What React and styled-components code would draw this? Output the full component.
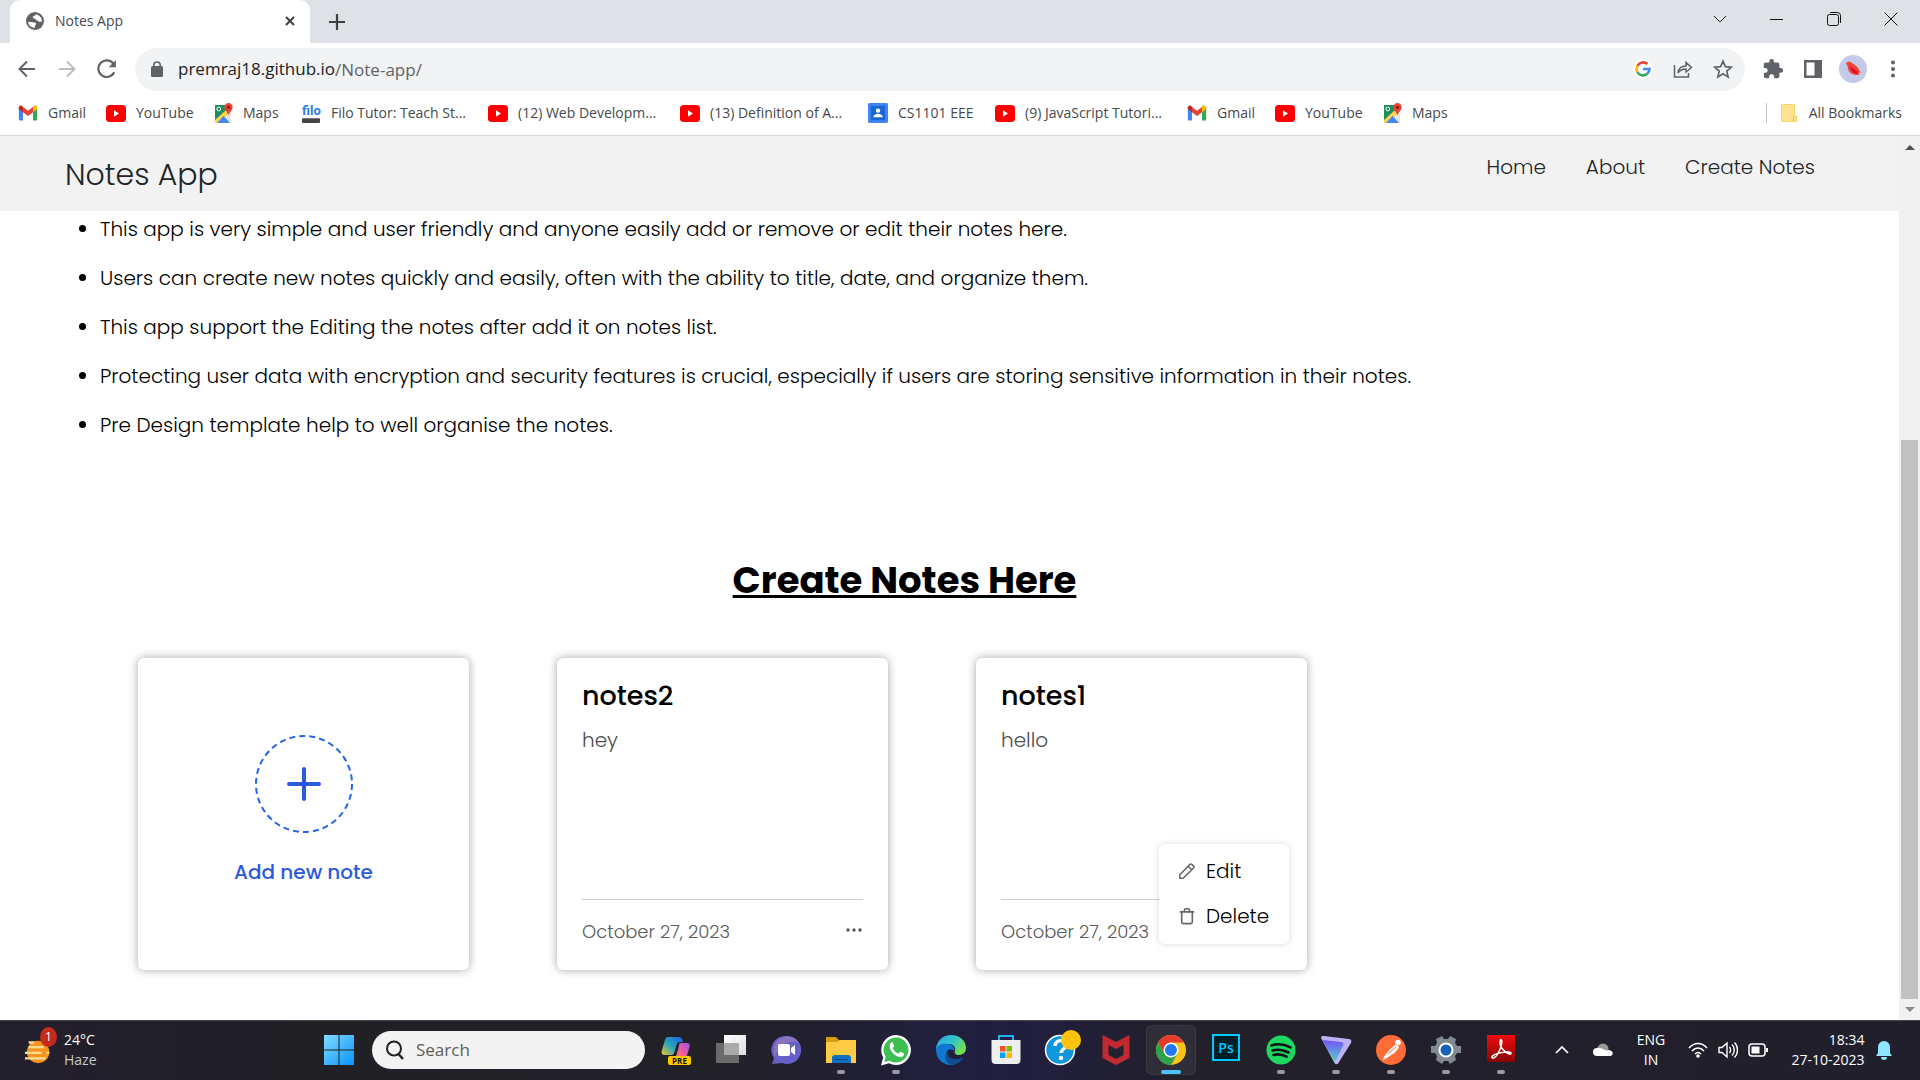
import React from "react";
import styled, { createGlobalStyle } from "styled-components";

const Global = createGlobalStyle`
  *{box-sizing:border-box}
  body{margin:0;background:#fff}
  h1,h2,h3,p,ul{margin:0;padding:0}
  button{font:inherit;color:inherit;background:none;border:0;padding:0;cursor:pointer;display:flex;align-items:center;justify-content:center}
  a{color:inherit;text-decoration:none}
  svg{display:block;flex:none}
`;
const ui = `"Segoe UI","Open Sans","Noto Sans",sans-serif`;
const web = `Poppins,Inter,sans-serif`;

const Screen = styled.div`min-height:100vh;display:flex;flex-direction:column;font-family:${ui};`;
const TabStrip = styled.header`height:43px;background:#dee1e6;display:flex;align-items:stretch;padding:0 1px 0 10px;`;
const Tab = styled.div`
  width:300px;background:#fff;border-radius:10px 10px 0 0;display:flex;align-items:center;gap:11px;padding:0 13px 2px 16px;
  font-size:14px;color:#45494d;span{flex:1}
`;
const NewTab = styled.button`width:54px;`;
const WindowButtons = styled.div`margin-left:auto;display:flex;`;
const WinBtn = styled.button`width:57px;height:37px;`;
const Toolbar = styled.div`display:flex;align-items:center;height:52px;padding:0 7px 0 7px;`;
const ToolBtn = styled.button`width:40px;height:40px;flex:none;`;
const Address = styled.div`
  flex:1;height:43px;margin:0 8px;border-radius:22px;background:#f1f3f4;display:flex;align-items:center;padding:0 2px 0 15px;gap:14px;
`;
const Cluster = styled.div`display:flex;margin-left:-14px;`;
const Url = styled.input`flex:1;min-width:0;border:0;outline:0;background:none;font:17px ${ui};color:#5f6368;padding:0;`;
const UrlBox = styled.label`flex:1;display:flex;font-size:17px;line-height:24px;color:#202124;`;
const Bookmarks = styled.nav`
  height:41px;border-bottom:1px solid #d5d6d8;display:flex;align-items:center;padding:0 18px 4px;gap:22px;font-size:14px;line-height:20px;color:#45494d;
`;
const Mark = styled.a`display:flex;align-items:center;gap:10px;white-space:nowrap;width:${p => p.$w}px;`;
const AllMarks = styled.a`margin-left:auto;height:20px;border-left:1px solid #c4c7cb;display:flex;align-items:center;gap:12px;padding-left:14px;`;

const Viewport = styled.div`flex:1;display:flex;background:#fff;`;
const Page = styled.main`flex:1;font-family:${web};`;
const Navbar = styled.header`
  height:75px;background:#f2f2f2;display:flex;align-items:center;padding:0 84px 0 65px;color:#212529;
`;
const Brand = styled.h1`font-weight:300;font-size:30px;line-height:44px;padding-top:3px;`;
const NavLinks = styled.nav`margin:0 0 14px auto;display:flex;gap:40px;font-size:20px;line-height:28px;font-weight:300;`;
const Features = styled.ul`padding:4px 40px 0 100px;font-size:20px;line-height:29px;font-weight:300;color:#000;li{margin-bottom:20px}`;
const Heading = styled.h2`font-size:37px;line-height:54px;font-weight:700;text-align:center;text-decoration:underline;text-decoration-thickness:3px;margin-top:113px;padding-right:90px;`;
const Grid = styled.section`display:flex;flex-wrap:wrap;gap:88px;padding:51px 40px 48px 138px;`;
const Card = styled.article`
  position:relative;width:331px;height:312px;border-radius:6px;background:#fff;box-shadow:0 0 10px rgba(0,0,0,.35);
  display:flex;flex-direction:column;padding:18px 25px 23px;
`;
const AddButton = styled.button`&&{flex:1;flex-direction:column;gap:22px;color:#2b5bdc;font-size:20px;line-height:34px;font-weight:500}`;
const Title = styled.h3`font-size:27px;line-height:40px;font-weight:500;`;
const Body = styled.p`font-size:20px;line-height:30px;font-weight:300;color:#4d4d4d;margin-top:9px;`;
const CardFoot = styled.footer`
  margin-top:auto;border-top:1px solid #ccc;padding-top:17px;display:flex;justify-content:space-between;align-items:center;font-size:18px;line-height:30px;font-weight:300;color:#5a5a5a;
`;
const Menu = styled.div`
  position:absolute;right:18px;bottom:26px;width:130px;height:100px;border-radius:5px;background:#fff;box-shadow:0 0 6px rgba(0,0,0,.15);
  display:flex;flex-direction:column;padding:4px 0;
`;
const MenuItem = styled.button`&&{justify-content:flex-start;height:45px;padding-left:19px;gap:10px;font-size:20px;font-weight:300;color:#000}`;
const Scrollbar = styled.div`width:21px;background:#f1f1f1;display:flex;flex-direction:column;align-items:center;justify-content:space-between;padding:7px 0 6px;`;
const Thumb = styled.div`width:17px;flex:1;margin:287px 0 5px;background:#c1c1c1;`;

const Taskbar = styled.footer`
  height:60px;border-top:1px solid #47474b;background:linear-gradient(90deg,#231f2d,#202025 16%,#222128 38%,#211f42 52%,#222029 62%,#221f2d);
  display:flex;align-items:center;color:#fff;padding:0 18px 2px 24px;
`;
const Weather = styled.button`&&{gap:8px;width:290px;justify-content:flex-start;text-align:left;font-size:14px;line-height:20px}`;
const Two = styled.span`display:flex;flex-direction:column;text-align:${p => p.$a || "left"};font-size:14px;line-height:20px;white-space:nowrap;`;
const Dim = styled.span`color:#c8c7cc;`;
const Start = styled.button`width:50px;height:48px;`;
const Search = styled.label`width:273px;height:38px;margin:0 6px 0 8px;border-radius:19px;background:#f3f3f3;display:flex;align-items:center;gap:11px;padding:0 13px;`;
const SearchInput = styled.input`border:0;outline:0;background:none;min-width:0;flex:1;padding:0;font:17px ${ui};color:#5d5d5d;&::placeholder{color:#5d5d5d;opacity:1}`;
const Apps = styled.div`display:flex;gap:5px;`;
const AppButton = styled.button`
  position:relative;width:50px;height:50px;border-radius:6px;${p => p.$active && "&&{background:#2f2d38;box-shadow:inset 0 0 0 1px #3a3843}"}
  &::after{content:"";position:absolute;bottom:1px;left:50%;transform:translateX(-50%);height:4px;border-radius:2px;width:${p => (p.$active ? 20 : p.$open ? 8 : 0)}px;background:${p => (p.$active ? "#4cc2ff" : "#9b9aa1")};}
`;
const Tray = styled.div`margin-left:auto;display:flex;align-items:center;`;
const TrayBtn = styled.button`&&{width:${p => p.$w}px;height:40px;gap:${p => p.$g || 0}px}`;

const S = ({ s = 20, v = 24, children, ...r }) => (
  <svg width={s} height={s} viewBox={`0 0 ${v} ${v}`} fill="none" aria-hidden="true" {...r}>{children}</svg>
);
const line = { stroke: "#5f6368", strokeWidth: 2 };

const PenIcon = () => (
  <S s={18} v={18}><path d="M1.800 16.200v-3.400L12 2.400a1.300 1.300 0 0 1 1.900 0l1.700 1.700a1.300 1.300 0 0 1 0 1.900L5.200 16.200zM10.200 4.300l3.500 3.500" stroke="#666" strokeWidth="1.500" strokeLinejoin="round" /></S>
);
const TrashIcon = () => (
  <S s={18} v={18}><path d="M1.800 4.900h14.400M3.700 4.900v10.200c0 .9.600 1.500 1.500 1.500h7.600c.9 0 1.500-.6 1.500-1.500V4.900M6.400 4.700V3.200c0-.9.600-1.500 1.500-1.500h2.200c.9 0 1.500.6 1.500 1.500v1.500" stroke="#666" strokeWidth="1.600" /></S>
);
const Gmail = () => (
  <S s={20}><path d="M1 6v13.500C1 20.300 1.700 21 2.500 21H6V10z" fill="#4285f4" /><path d="M18 10v11h3.500c.8 0 1.500-.7 1.500-1.500V6z" fill="#34a853" /><path d="M18 5v6l5-3.800V5.500C23 3 20 2 18 3.600z" fill="#fbbc04" /><path d="M6 11V4.700l6 4.600 6-4.600V11l-6 4.600z" fill="#ea4335" /><path d="M1 5.500v1.700L6 11V4.700L4.800 3.600C3.200 2.400 1 3.600 1 5.500z" fill="#c5221f" /></S>
);
const YouTube = () => (
  <svg width="20" height="17" viewBox="0 0 20 17" aria-hidden="true"><rect width="20" height="17" rx="3.500" fill="#f00" /><path d="M8 5.300v6.400l5-3.200z" fill="#fff" /></svg>
);
const Maps = () => (
  <svg width="18" height="22" viewBox="2 0 18 22" fill="none" aria-hidden="true"><path d="M2 3h16v18H2z" fill="#e4e4e4" /><path d="M2 3h11v8l-11 9z" fill="#1e8e5a" /><path d="M2 18L13 8l3 3L6 21H2z" fill="#fcd34b" /><path d="M4 21l6.500-7 6.500 7z" fill="#4285f4" /><circle cx="5.800" cy="7" r="1.900" stroke="#fff" /><path d="M15.500 1a4.200 4.200 0 0 1 4.200 4.200c0 3-3.200 4.500-4.200 8.300-1-3.800-4.200-5.300-4.200-8.300A4.200 4.200 0 0 1 15.500 1z" fill="#ea4335" /><circle cx="15.500" cy="5.300" r="1.600" fill="#811d16" /></svg>
);
const FiloBox = styled.span`display:flex;flex-direction:column;align-items:center;width:19px;font:700 13px/15px Roboto,sans-serif;color:#287de8;`;
const FiloTag = styled.span`width:18px;height:5px;border-radius:1px;background:#444;border-top:1px solid #777;`;
const Filo = () => <FiloBox>filo<FiloTag /></FiloBox>;
const Contact = () => (
  <S s={20} v={21}><rect width="21" height="21" rx="1.500" fill="#4285f4" /><rect x="3" y="3" width="15" height="15" fill="#1967d2" /><circle cx="10.500" cy="8" r="2.300" fill="#fff" /><path d="M5.500 15c0-5 10-5 10 0z" fill="#fff" /></S>
);
const marks = [
  ["Gmail", Gmail, 66], ["YouTube", YouTube, 87], ["Maps", Maps, 65], ["Filo Tutor: Teach St...", Filo, 164],
  ["(12) Web Developm...", YouTube, 170], ["(13) Definition of A...", YouTube, 166], ["CS1101 EEE", Contact, 105],
  ["(9) JavaScript Tutori...", YouTube, 170], ["Gmail", Gmail, 66], ["YouTube", YouTube, 87], ["Maps", Maps, 65],
];

const PreTag = styled.span`position:absolute;left:17px;bottom:10px;width:23px;background:#ffc800;color:#111;border-radius:2px;font-size:8px;line-height:9px;font-weight:700;text-align:center;`;
const PsTag = styled.span`width:28px;height:27px;border:2px solid #00c8ff;background:#001e26;color:#00c8ff;font-size:14px;line-height:23px;font-weight:600;text-align:center;margin-bottom:4px;`;
const CountTag = styled.span`position:absolute;left:16px;top:-8px;width:17px;height:20px;border-radius:50%;background:#c42b1c;color:#fff;font-size:12px;line-height:20px;text-align:center;`;
const WeatherIcon = styled.span`position:relative;width:32px;`;

const apps = [
  ["Copilot", <><S s={32} v={32}><defs><linearGradient id="c1" x1="0" y1="1" x2="1" y2="0"><stop stopColor="#f5c52c" /><stop offset=".45" stopColor="#2aa7b8" /><stop offset="1" stopColor="#1c5ee8" /></linearGradient><linearGradient id="c2" x1="1" y1="0" x2="0" y2="1"><stop stopColor="#a74df1" /><stop offset=".6" stopColor="#f0609b" /><stop offset="1" stopColor="#ff8b4a" /></linearGradient></defs><path d="M8 3h11c2 0 3 1 3.500 3L23 8h-3c-2 0-3 1-3.500 3l-2 7c-.5 2-1.500 3-3.500 3H5c-3 0-4-2-3-5l3-10c.6-2 1.500-3 3-3z" fill="url(#c1)" /><path d="M20 9h7c2.500 0 3 2 2.500 4l-3 10H14c2 0 2.500-2 3-4l2-7c.3-1.500 0-3 1-3z" fill="url(#c2)" /></S><PreTag>PRE</PreTag></>],
  ["Task View", <S s={32} v={32}><defs><linearGradient id="tv" x2="1" y2="1"><stop stopColor="#fff" /><stop offset="1" stopColor="#ddd" /></linearGradient></defs><rect x="1" y="9" width="23" height="20" fill="#6b6b6b" /><rect x="9" y="1" width="22" height="20" fill="url(#tv)" /><path d="M9 9h15v12H9z" fill="#aaa" /></S>],
  ["Chat", <S s={32} v={32}><path d="M17 2a14 14 0 1 1-5 27l-10 1 2-6A14 14 0 0 1 17 2z" fill="#6860c9" /><path d="M4 12A14 14 0 0 1 29 9C20 5 10 9 4 24z" fill="#8a73bd" /><rect x="8" y="10" width="12" height="12" rx="2" fill="#fff" /><path d="M21 14l4-3v10l-4-3z" fill="#fff" /></S>],
  ["File Explorer", <S s={32} v={32}><path d="M1 3h10l3 3h17v6H1z" fill="#d99a0b" /><path d="M1 8h11l3-2h16v23H1z" fill="#ffcb45" /><path d="M7 29v-5a3 3 0 0 1 3-3h13a3 3 0 0 1 3 3v5z" fill="#0f6fc0" /><path d="M10 25.500h13" stroke="#084c88" /></S>, 1],
  ["WhatsApp", <S s={32} v={32}><path d="M16 1a15 15 0 1 1-7 28.300L1 31.500l2.200-8A15 15 0 0 1 16 1z" fill="#fff" /><path d="M16 3.500a12.500 12.500 0 1 1-6.500 23.200L4.300 28l1.400-5A12.500 12.500 0 0 1 16 3.500z" fill="#3dbf52" /><path d="M10.500 9c1.500-1.400 2.200-.6 2.700.6l.9 2.200c.3 1-1.600 2-1.300 2.600 1.400 2.700 3.300 4.200 5.600 5 .8.200 1.400-2 2.300-1.700l3 1.500c.9.500.2 2.600-1 3.400-5 3-16-7-12.200-13.600z" fill="#fff" /></S>, 1],
  ["Edge", <S s={32} v={32}><defs><linearGradient id="e1" x2="1" y2=".5"><stop stopColor="#28a4e8" /><stop offset=".6" stopColor="#33c6c4" /><stop offset="1" stopColor="#70e24b" /></linearGradient></defs><path d="M1 16C1 7 8 1 16 1c9 0 15 6 15 13 0 5-4 7-7 7-4 0-5-2-4-4 1-4-2-7-6-7C7 10 2 14 1 16z" fill="url(#e1)" /><path d="M1 16c1-5 6-7 12-6 5 1 7 4 6 7-4-4-8 0-8 4 0 5 4 9 9 9.500C10 33 1 26 1 16z" fill="#0c78d4" /><path d="M13 16c-3 7 4 12 16 7-3 5-8 8-13 8-6-3-8-10-3-15z" fill="#104e91" /></S>],
  ["Store", <S s={32} v={32}><path d="M9 8V2h14v6" stroke="#21b2ee" strokeWidth="2" /><path d="M1.500 6h29v20c0 3-2 4-4 4h-21c-2 0-4-1-4-4z" fill="#eee" /><path d="M10 12h5.500v5.500H10z" fill="#f25022" /><path d="M16.500 12H22v5.500h-5.500z" fill="#7fba00" /><path d="M10 18.500h5.500V24H10z" fill="#00a4ef" /><path d="M16.500 18.500H22V24h-5.500z" fill="#ffb900" /></S>],
  ["Get Help", <svg width="40" height="40" viewBox="0 0 40 40"><circle cx="19" cy="20" r="14.500" fill="#1096dc" stroke="#fff" strokeWidth="1.500" /><path d="M14 16c0-7 11-7 11-1 0 4-5 4-5 8" stroke="#fff" strokeWidth="3.500" fill="none" /><circle cx="20" cy="28" r="2.200" fill="#fff" /><circle cx="30" cy="10" r="10" fill="#ffc20e" /></svg>],
  ["McAfee", <S s={32} v={32}><path d="M2.500 1l13.500 7 13.500-7v23L16 31 2.500 24zm6 10v10l7.500 4 7.500-4V11L16 15z" fill="#c12b2f" fillRule="evenodd" /></S>],
  ["Chrome", <S s={32} v={32}><circle cx="16" cy="16" r="15" fill="#fbc116" /><path d="M3 8.500A15 15 0 0 1 29 8.500H16L9.500 19.750z" fill="#e33b2e" /><path d="M3 8.500A15 15 0 0 0 16 31l6.500-11.250H9.500z" fill="#2da14c" /><circle cx="16" cy="16" r="7.500" fill="#fff" /><circle cx="16" cy="16" r="6" fill="#2478ef" /></S>, 0, 1],
  ["Photoshop", <PsTag>Ps</PsTag>],
  ["Spotify", <S s={32} v={32}><circle cx="16" cy="16" r="14.500" fill="#1ed760" /><path d="M6.500 11.500c6-2 13-1.200 19 1.800M7.500 16.500c5.500-1.500 11-.8 16 2M8.500 21c4.500-1.200 9-.6 13 1.700" stroke="#111" strokeWidth="2.600" strokeLinecap="round" /></S>, 1],
  ["Proton VPN", <S s={32} v={32}><defs><linearGradient id="pv" x2="0" y2="1"><stop stopColor="#7750f6" /><stop offset="1" stopColor="#50d6ca" /></linearGradient></defs><path d="M1 4c0-2 1-2 3-2l25 3c2 0 3 2 2 4L19 28c-1 3-4 3-5 0z" fill="#b9b3f5" /><path d="M2 6l19 2c2 0 3 2 2 4l-8 16z" fill="url(#pv)" /></S>, 1],
  ["Postman", <S s={32} v={32}><circle cx="16" cy="16" r="15" fill="#ff6c37" /><circle cx="23" cy="8.500" r="2.800" fill="#fff" /><path d="M20 11c2 0 4 1 4 2.500l-4 5-12 8 1-4 6-7z" fill="#fff" /><path d="M13 20l8-7" stroke="#ff6c37" /></S>, 1],
  ["Settings", <S s={32} v={32}><path d="M12 2l2 3h4l2-3 6 3-1 4 2 3h4v7h-4l-2 3 1 4-6 4-2-3h-4l-2 3-6-4 1-4-2-3H1v-7h4l2-3-1-4z" fill="#818991" /><circle cx="16" cy="16" r="6.500" fill="#1164b4" stroke="#fff" strokeWidth="2" /></S>, 1],
  ["Acrobat", <svg width="28" height="30" viewBox="0 0 28 30"><defs><linearGradient id="ac" x2="0" y2="1"><stop stopColor="#f00b0b" /><stop offset="1" stopColor="#860505" /></linearGradient></defs><path d="M0 0h28v27H0z" fill="url(#ac)" /><path d="M13.500 4.500c2.500-.5 1.500 7-2.500 14-2.500 4.500-6.500 6-6 3.500.8-3.800 19.500-7 19-3.500-.6 3-14-5.500-10.500-14z" stroke="#fff" strokeWidth="1.500" fill="none" /></svg>, 1],
];

export default function App() {
  return (
    <Screen>
      <Global />
      <TabStrip>
        <Tab>
          <S s={18}><circle cx="12" cy="12" r="12" fill="#5f6368" /><path d="M3 13l8 1c3 0 3 3 1 4v3C7 21 3 18 3 13zM13 3c-1 3-4 2-4 4s3 1 4 3 4 1 4 3h4c1-5-3-9-8-10z" fill="#fff" /></S>
          <span>Notes App</span>
          <button aria-label="Close tab"><S s={14} v={14}><path d="M3 3l8 8M11 3l-8 8" stroke="#3c4043" strokeWidth="2" /></S></button>
        </Tab>
        <NewTab aria-label="New tab"><S s={16} v={16}><path d="M8 0v16M0 8h16" stroke="#3c4043" strokeWidth="2.200" /></S></NewTab>
        <WindowButtons>
          <WinBtn aria-label="Search tabs"><S s={14} v={14}><path d="M1 4l6 6 6-6" stroke="#222" /></S></WinBtn>
          <WinBtn aria-label="Minimize"><S s={14} v={14}><path d="M0 7.500h13" stroke="#111" /></S></WinBtn>
          <WinBtn aria-label="Restore"><S s={14} v={14}><rect x=".5" y="2.500" width="11" height="11" rx="2" stroke="#111" /><path d="M3 .5h7.500a3 3 0 0 1 3 3V11" stroke="#111" /></S></WinBtn>
          <WinBtn aria-label="Close"><S s={14} v={14}><path d="M.5.5l13 13M13.500.5l-13 13" stroke="#111" /></S></WinBtn>
        </WindowButtons>
      </TabStrip>
      <Toolbar>
        <ToolBtn aria-label="Back"><S s={18} v={18}><path d="M17 9H2M9 1.500L1.500 9 9 16.500" {...line} /></S></ToolBtn>
        <ToolBtn aria-label="Forward"><S s={18} v={18}><path d="M1 9h15M9 1.500L16.500 9 9 16.500" stroke="#bcbec0" strokeWidth="2" /></S></ToolBtn>
        <ToolBtn aria-label="Reload"><S s={20} v={18}><path d="M15.500 12A7.500 7.500 0 1 1 15 4.500" {...line} /><path d="M17 1v6.500h-6.500z" fill="#5f6368" /></S></ToolBtn>
        <Address>
          <svg width="14" height="16" viewBox="0 0 14 16" aria-hidden="true"><rect x="1" y="5" width="12" height="11" rx="1.500" fill="#5f6368" /><path d="M3.800 6V4.200a3.200 3.200 0 0 1 6.400 0V6" stroke="#5f6368" strokeWidth="1.600" fill="none" /></svg>
          <UrlBox>premraj18.github.io<Url aria-label="Address" defaultValue="/Note-app/" /></UrlBox>
          <ToolBtn aria-label="Google Search"><S s={20} v={20}><circle cx="10" cy="10" r="10" fill="#fff" /><path d="M14.400 5A6.500 6.500 0 0 0 4.300 7" stroke="#ea4335" strokeWidth="2.600" /><path d="M4.300 7a6.500 6.500 0 0 0 0 6" stroke="#fbbc05" strokeWidth="2.600" /><path d="M4.300 13a6.500 6.500 0 0 0 9.700 2" stroke="#34a853" strokeWidth="2.600" /><path d="M10 10h6.500a6.500 6.500 0 0 1-2.500 5" stroke="#4285f4" strokeWidth="2.600" /></S></ToolBtn>
          <Cluster>
            <ToolBtn aria-label="Share"><S s={20} v={20}><path d="M1.500 6v12h14v-4M5 14c.5-5 3-7 8-7V3.500L18.500 8.500 13 13v-3c-4 0-6 1-8 4z" stroke="#5f6368" strokeWidth="1.500" /></S></ToolBtn>
            <ToolBtn aria-label="Bookmark"><S s={20}><path d="M12 2.500l2.800 6.700 7.200.6-5.500 4.700 1.700 7L12 17.700 5.800 21.500l1.700-7L2 9.800l7.200-.6z" {...line} /></S></ToolBtn>
          </Cluster>
        </Address>
        <ToolBtn aria-label="Extensions"><S s={22}><path d="M20.500 11H19V7c0-1.100-.9-2-2-2h-4V3.500a2.500 2.500 0 0 0-5 0V5H4c-1.100 0-2 .9-2 2v3.800h1.500a2.700 2.700 0 0 1 0 5.400H2V20c0 1.100.9 2 2 2h3.800v-1.500a2.700 2.700 0 0 1 5.400 0V22H17c1.100 0 2-.9 2-2v-4h1.500a2.500 2.500 0 0 0 0-5z" fill="#5f6368" /></S></ToolBtn>
        <ToolBtn aria-label="Side panel"><S s={18} v={18}><path d="M0 0h18v18H0zm2.500 2.500v13h8v-13z" fill="#5f6368" fillRule="evenodd" /></S></ToolBtn>
        <ToolBtn aria-label="Profile"><S s={28} v={28}><circle cx="14" cy="14" r="14" fill="#c5cae9" /><path d="M7 8.500c1-2.500 5-2.500 6.500 0 3 1 5.500 4 8.500 9.500l-2.500-1 1 3c-7 .5-11.500-2-12-9z" fill="#f44336" /><path d="M11 11l8 6-1 2c-4-1-7-4-7-8z" fill="#d9102e" /></S></ToolBtn>
        <ToolBtn aria-label="Chrome menu"><S s={18} v={18}><circle cx="9" cy="2.500" r="2" fill="#5f6368" /><circle cx="9" cy="9" r="2" fill="#5f6368" /><circle cx="9" cy="15.500" r="2" fill="#5f6368" /></S></ToolBtn>
      </Toolbar>
      <Bookmarks aria-label="Bookmarks">
        {marks.map(([t, I, w], i) => <Mark href="#" key={i} $w={w}><I />{t}</Mark>)}
        <AllMarks href="#"><svg width="16" height="18" viewBox="0 0 16 18" aria-hidden="true"><path d="M.5.5h13V12h2v5.500H.5z" fill="#ffe391" stroke="#f4d66b" /><path d="M12.500 17v-4.500h3" stroke="#eac54f" fill="none" /></svg>All Bookmarks</AllMarks>
      </Bookmarks>

      <Viewport>
        <Page>
          <Navbar>
            <Brand>Notes App</Brand>
            <NavLinks><a href="#home">Home</a><a href="#about">About</a><a href="#create">Create Notes</a></NavLinks>
          </Navbar>
          <Features>
            <li>This app is very simple and user friendly and anyone easily add or remove or edit their notes here.</li>
            <li>Users can create new notes quickly and easily, often with the ability to title, date, and organize them.</li>
            <li>This app support the Editing the notes after add it on notes list.</li>
            <li>Protecting user data with encryption and security features is crucial, especially if users are storing sensitive information in their notes.</li>
            <li>Pre Design template help to well organise the notes.</li>
          </Features>
          <Heading id="create">Create Notes Here</Heading>
          <Grid>
            <Card>
              <AddButton>
                <S s={98} v={98}><circle cx="49" cy="49" r="48" stroke="#2563eb" strokeWidth="2" strokeDasharray="6 4.050" /><path d="M49 34v30M34 49h30" stroke="#2b5bdc" strokeWidth="4" strokeLinecap="round" /></S>
                Add new note
              </AddButton>
            </Card>
            <Card>
              <Title>notes2</Title><Body>hey</Body>
              <CardFoot>October 27, 2023<button aria-label="Note options"><S s={18} v={18}><circle cx="3" cy="7" r="1.700" fill="#555" /><circle cx="9" cy="7" r="1.700" fill="#555" /><circle cx="15" cy="7" r="1.700" fill="#555" /></S></button></CardFoot>
            </Card>
            <Card>
              <Title>notes1</Title><Body>hello</Body>
              <CardFoot>October 27, 2023</CardFoot>
              <Menu>
                <MenuItem><PenIcon />Edit</MenuItem>
                <MenuItem><TrashIcon />Delete</MenuItem>
              </Menu>
            </Card>
          </Grid>
        </Page>
        <Scrollbar aria-hidden="true">
          <S s={10} v={10}><path d="M0 7l5-5 5 5z" fill="#505050" /></S>
          <Thumb />
          <S s={10} v={10}><path d="M0 3l5 5 5-5z" fill="#8a8a8a" /></S>
        </Scrollbar>
      </Viewport>

      <Taskbar>
        <Weather>
          <WeatherIcon>
            <S s={30} v={32}><circle cx="15" cy="18" r="12" fill="#f7931e" /><path d="M5 8h6M5 13h16M1 19h18M1 25h22M24 19h3" stroke="#f4dd96" strokeWidth="2.500" /></S>
            <CountTag>1</CountTag>
          </WeatherIcon>
          <Two>24°C<Dim>Haze</Dim></Two>
        </Weather>
        <Start aria-label="Start"><S s={30} v={30}><defs><linearGradient id="w" x2="1" y2="1"><stop stopColor="#7fdcff" /><stop offset="1" stopColor="#0a93fb" /></linearGradient></defs><path d="M0 0h14.500v14.500H0zM15.500 0H30v14.500H15.500zM0 15.500h14.500V30H0zM15.500 15.500H30V30H15.500z" fill="url(#w)" /></S></Start>
        <Search><S s={20} v={20}><circle cx="9" cy="8.500" r="7" stroke="#222" strokeWidth="2" /><path d="M13.500 14l4.500 5" stroke="#222" strokeWidth="2.500" /></S><SearchInput aria-label="Search" placeholder="Search" /></Search>
        <Apps>{apps.map(([n, icon, open, active]) => <AppButton key={n} aria-label={n} $open={open} $active={active}>{icon}</AppButton>)}</Apps>
        <Tray>
          <TrayBtn $w={16} aria-label="Hidden icons"><S s={14} v={14}><path d="M1 10l6-6 6 6" stroke="#fff" strokeWidth="1.700" /></S></TrayBtn>
          <TrayBtn $w={66} aria-label="OneDrive"><S s={20} v={20}><circle cx="10" cy="9" r="5.500" fill="#999" /><path d="M4 16a4 4 0 0 1 0-8c5-1 8 4 12 2 5 1 5 6 0 6z" fill="#fff" /></S></TrayBtn>
          <TrayBtn $w={30}><Two $a="center"><span>ENG</span><span>IN</span></Two></TrayBtn>
          <TrayBtn $w={124} $g={10} aria-label="Network, volume, battery">
            <S s={20} v={20}><path d="M1 8c5-6 13-6 18 0M4 11c3.500-4 8.500-4 12 0M7 14c2-2 4-2 6 0" stroke="#fff" strokeWidth="1.500" /><circle cx="10" cy="16" r="1.800" fill="#fff" /></S>
            <S s={20} v={20}><path d="M1 7.500h3L9 3v14l-5-4.500H1zM11.500 7c1.500 2 1.500 4 0 6M14 4.500c3 3 3 8 0 11M16.500 2.500c4 4 4 11 0 15" stroke="#fff" strokeWidth="1.400" /></S>
            <S s={20} v={20}><rect x="1" y="4" width="16" height="12" rx="3" stroke="#fff" strokeWidth="1.500" /><path d="M3.500 6.500h8v7h-8zM18 8h2v4h-2z" fill="#fff" /></S>
          </TrayBtn>
          <TrayBtn $w={76}><Two $a="right"><span>18:34</span><span>27-10-2023</span></Two></TrayBtn>
          <TrayBtn $w={36} aria-label="Notifications"><S s={20} v={20}><path d="M10 1a6 6 0 0 1 6 6v6l2 3H2l2-3V7a6 6 0 0 1 6-6zM7 17h6a3 3 0 0 1-6 0z" fill="#8fe6ff" /></S></TrayBtn>
        </Tray>
      </Taskbar>
    </Screen>
  );
}
